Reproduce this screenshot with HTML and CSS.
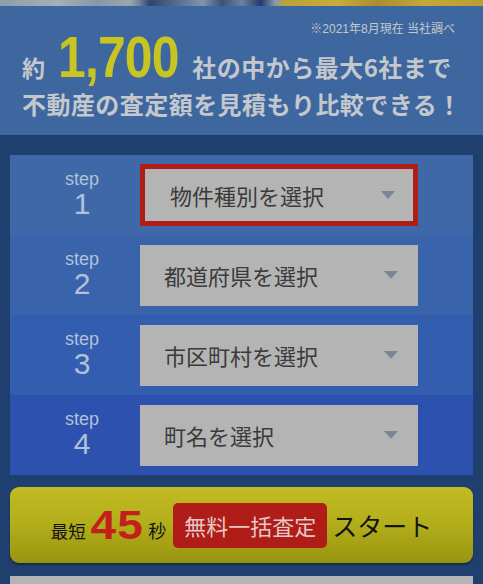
FILE: index.html
```html
<!DOCTYPE html>
<html lang="ja">
<head>
<meta charset="utf-8">
<title>不動産一括査定</title>
<link rel="stylesheet" href="styles.css">
</head>
<body>
<div class="photo-strip"></div>
<header class="hero">
  <p class="note">※2021年8月現在 当社調べ</p>
  <p class="lead">
    <span class="lead-sm">約</span><span class="lead-num">1,700</span><span class="lead-md">社の中から最大6社まで</span>
  </p>
  <p class="lead2">不動産の査定額を見積もり比較できる！</p>
</header>
<main class="form">
  <section class="steps">
    <div class="step step-1">
      <div class="step-label"><span class="step-word">step</span><span class="step-num">1</span></div>
      <div class="select select-active"><span class="select-text">物件種別を選択</span><span class="arrow"></span></div>
    </div>
    <div class="step step-2">
      <div class="step-label"><span class="step-word">step</span><span class="step-num">2</span></div>
      <div class="select"><span class="select-text">都道府県を選択</span><span class="arrow"></span></div>
    </div>
    <div class="step step-3">
      <div class="step-label"><span class="step-word">step</span><span class="step-num">3</span></div>
      <div class="select"><span class="select-text">市区町村を選択</span><span class="arrow"></span></div>
    </div>
    <div class="step step-4">
      <div class="step-label"><span class="step-word">step</span><span class="step-num">4</span></div>
      <div class="select"><span class="select-text">町名を選択</span><span class="arrow"></span></div>
    </div>
  </section>
  <button class="start-btn" type="button">
    <span class="btn-sm">最短</span><span class="btn-num">45</span><span class="btn-sec">秒</span><span class="btn-badge">無料一括査定</span><span class="btn-start">スタート</span>
  </button>
  <div class="next-box"></div>
</main>
</body>
</html>
```

FILE: styles.css
```css
* { box-sizing: border-box; }
html, body { margin: 0; padding: 0; }
body {
  background: #1f406f;
  font-family: "Noto Sans CJK JP", "Liberation Sans", sans-serif;
  width: 483px;
  height: 584px;
  overflow: hidden;
}
p { margin: 0; }

.photo-strip {
  height: 6px;
  background: linear-gradient(90deg,
    #8e9dab 0, #a5b0b8 12%, #8898a8 20%, #9aa6b0 27%, #6a7f98 29%,
    #2c4670 31%, #52688c 36%, #8094ae 42%, #3a5278 46%, #6c82a0 50%,
    #1f3c6e 54%, #8a99aa 57%, #b9a338 59%, #c8ac3c 70%, #a88f2e 78%, #c3a83a 88%, #b79e34 100%);
}

.hero {
  background: #3e679f;
  height: 129px;
  padding: 15px 28px 0 22px;
  color: #c4c7cc;
  font-weight: bold;
  white-space: nowrap;
}
.note {
  text-align: right;
  font-size: 12px;
  font-weight: normal;
  line-height: 16px;
  color: #c4c7cc;
  font-family: "Liberation Sans", "Noto Sans CJK JP", sans-serif;
}
.lead {
  display: flex;
  align-items: baseline;
  height: 46px;
  line-height: 46px;
  margin-top: -3px;
}
.lead-sm { font-size: 23px; }
.lead-num {
  display: inline-block;
  font-family: "Liberation Sans", sans-serif;
  font-size: 58px;
  color: #c8c422;
  letter-spacing: -1px;
  transform: scaleX(0.86);
  transform-origin: left center;
  margin: 0 -6px 0 13px;
}
.lead-md { font-size: 24px; letter-spacing: 0.5px; }
.lead2 {
  font-size: 24px;
  line-height: 36px;
  margin-top: 6px;
  letter-spacing: 0.45px;
}

.form { padding: 20px 10px 0; }
.steps { display: flex; flex-direction: column; }
.step {
  height: 80px;
  display: flex;
  align-items: center;
}
.step-1 { background: #3e68a7; }
.step-2 { background: #3963ab; }
.step-3 { background: #335dae; }
.step-4 { background: #2d51af; }

.step-label {
  width: 116px;
  margin-left: 14px;
  display: flex;
  flex-direction: column;
  align-items: center;
  color: #b2c1da;
  font-family: "Liberation Sans", sans-serif;
}
.step-word { font-size: 18px; line-height: 18px; }
.step-num { font-size: 30px; line-height: 32px; }

.select {
  width: 278px;
  height: 61px;
  background: #b4b4b4;
  display: flex;
  align-items: center;
  justify-content: space-between;
  padding: 0 20px 0 24px;
}
.select-active {
  border: 5px solid #b01c17;
  padding: 0 18px 0 25px;
  height: 62px;
}
.select-text {
  font-size: 22px;
  color: #3b3b3b;
}
.arrow {
  width: 0;
  height: 0;
  border-left: 7px solid transparent;
  border-right: 7px solid transparent;
  border-top: 8px solid #7b8596;
}

.start-btn {
  margin-top: 12px;
  width: 463px;
  height: 76px;
  border: none;
  border-radius: 9px;
  background: linear-gradient(180deg, #c1bc23 0%, #b2ad1a 50%, #999410 100%);
  box-shadow: 0 2px 2px rgba(0,0,0,0.35);
  display: flex;
  align-items: center;
  justify-content: center;
  padding: 0;
  font-family: "Noto Sans CJK JP", sans-serif;
  color: #141414;
}
.btn-sm { font-size: 17.5px; margin-top: 10px; }
.btn-num {
  display: inline-block;
  font-family: "Liberation Sans", sans-serif;
  font-weight: bold;
  font-size: 40px;
  color: #c31f1c;
  letter-spacing: 1px;
  transform: scaleX(1.15);
  transform-origin: center;
  margin: 0 8px 0 8px;
}
.btn-sec { font-size: 18px; margin-top: 10px; }
.btn-badge {
  background: #b01c17;
  color: #e3c8c6;
  font-size: 22px;
  height: 45px;
  line-height: 45px;
  padding: 0 11px;
  border-radius: 5px;
  margin: 0 5px 0 7px;
}
.btn-start { font-size: 25px; }

.next-box {
  margin-top: 13px;
  height: 30px;
  background: #b4b4b4;
}
```
